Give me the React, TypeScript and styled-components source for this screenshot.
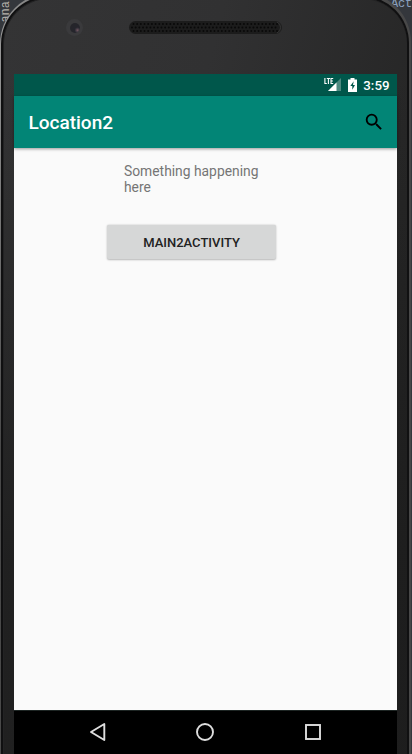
import React from "react";
import styled, { createGlobalStyle } from "styled-components";

const GlobalStyle = createGlobalStyle`
  * { box-sizing: border-box; }
  body { margin: 0; background: #303234; font-family: Roboto, sans-serif; }
`;

const Desktop = styled.div`
  position: relative;
  width: 412px;
  height: 754px;
  overflow: hidden;
  background: #34373c;
`;

const EditorText = styled.span<{ $side: "left" | "right" }>`
  position: absolute;
  font: 12px/12px "Liberation Mono", monospace;
  white-space: nowrap;
  ${({ $side }) =>
    $side === "left"
      ? "left: 0; top: 1px; color: #b5b0aa; writing-mode: vertical-rl; transform: rotate(180deg);"
      : "left: 391px; top: -2px; color: #8ba0bd; letter-spacing: -0.2px;"}
`;

const PhoneShell = styled.div`
  position: relative;
  width: 411px;
  height: 860px;
  margin-top: -7px;
  padding: 3px 2px 0 1px;
  border-radius: 51px 49px 0 0;
  background: linear-gradient(100deg, #a0a0a0 0, #8a8a8a 22px, #494949 80px, #484848 100%);
`;

const PhoneRim = styled.div`
  height: 100%;
  padding: 2px 2px 0;
  border-radius: 48px 47px 0 0;
  background: #101011;
`;

const PhoneBody = styled.div`
  height: 100%;
  padding: 0 11px 0 10px;
  border: solid #232324;
  border-width: 1px 0 0 1px;
  border-radius: 46px 45px 0 0;
  background:
    linear-gradient(180deg, transparent 80px, rgba(29, 29, 29, 0.85) 560px),
    linear-gradient(105deg, #343435 0%, #313132 35%, #252525 75%, #1f1f1f 100%);
`;

const Forehead = styled.div`
  display: flex;
  height: 75px;
  padding: 21px 0 0 52px;
`;

const Camera = styled.div`
  display: grid;
  place-items: center;
  width: 17px;
  height: 17px;
  margin: -1px 45px 0 0;
  border-radius: 50%;
  background: #3a3a3c;

  &::after {
    content: "";
    width: 10px;
    height: 10px;
    border-radius: 50%;
    background: radial-gradient(circle at 75% 72%, #74575f 0, #453c46 1.5px, #25252c 3px, #252529 100%);
  }
`;

const Speaker = styled.svg`
  width: 155px;
  height: 15px;
`;

const Screen = styled.main`
  display: flex;
  flex-direction: column;
  width: 383px;
  height: 680px;
  background: #fafafa;
`;

const StatusBar = styled.div`
  display: flex;
  align-items: center;
  justify-content: flex-end;
  flex: 0 0 22px;
  height: 22px;
  padding-right: 7.5px;
  background: #00574b;
  color: #fff;
`;

const StatusIcons = styled.svg`
  width: 34px;
  height: 16px;
  margin: -1px 5.5px 0 0;
`;

const Clock = styled.span`
  padding-top: 2px;
  font-size: 13.3px;
  font-weight: 500;
  line-height: 20px;
`;

const AppBar = styled.header`
  display: flex;
  align-items: center;
  justify-content: space-between;
  flex: 0 0 52px;
  padding: 0 12px 0 14.5px;
  background: #028576;
  box-shadow: 0 1px 3px rgba(0, 0, 0, 0.4);
`;

const Title = styled.h1`
  margin: 2px 0 0;
  color: #fff;
  font-size: 19px;
  font-weight: 500;
  line-height: 24px;
`;

const SearchButton = styled.button`
  display: flex;
  padding: 0;
  border: 0;
  background: none;
`;

const Content = styled.section`
  flex: 1;
  padding: 15px 0 0 93px;
`;

const Message = styled.p`
  width: 150px;
  margin: 0 0 30px 17px;
  color: #757575;
  font-size: 13.85px;
  line-height: 16px;
`;

const ActionButton = styled.button`
  display: block;
  width: 169px;
  height: 34px;
  padding: 1px 0 0;
  border: 0;
  border-radius: 2px;
  background: #d6d7d7;
  box-shadow: 0 0.5px 2px rgba(0, 0, 0, 0.28);
  color: #222;
  font: 500 13px/33px Roboto, sans-serif;
`;

const NavBar = styled.nav`
  display: flex;
  justify-content: space-between;
  flex: 0 0 44px;
  padding: 10px 73px 0;
  border-top: 1px solid #1d2523;
  background: #000;
`;

const NavIcon = styled.svg`
  width: 22px;
  height: 22px;
  fill: none;
  stroke: #dedede;
  stroke-width: 1.9;
`;

const speakerRows = [
  { y: 4, start: 5.5, count: 40 },
  { y: 7.5, start: 4, count: 40 },
  { y: 11, start: 5.5, count: 40 },
];

function SpeakerGrille() {
  return (
    <Speaker viewBox="0 0 155 15">
      <rect x="1" y="1" width="153" height="13" rx="6.5" fill="#1c1c1c" />
      <path d="M149 2a6 6 0 0 1 0 11" fill="none" stroke="#3b3b3b" strokeWidth="0.8" />
      {speakerRows.map(({ y, start, count }) =>
        Array.from({ length: count }, (_, i) => (
          <circle key={`${y}-${i}`} cx={start + i * 3.68} cy={y} r="0.95" fill="#090909" />
        )),
      )}
    </Speaker>
  );
}

export default function App() {
  return (
    <>
      <GlobalStyle />
      <Desktop>
        <EditorText $side="left">ana</EditorText>
        <EditorText $side="right">Act</EditorText>
        <PhoneShell>
          <PhoneRim>
            <PhoneBody>
              <Forehead>
                <Camera />
                <SpeakerGrille />
              </Forehead>
              <Screen>
                <StatusBar>
                  <StatusIcons viewBox="0 0 34 16">
                    <path d="M17 1V14H4Z" fill="#4d8980" />
                    <path d="M12.5 5.5V14H4Z" fill="#fff" />
                    <path
                      d="M.9 1V6.5H2.8M2.8 1.5H6M4.4 1.5V7M9.2 1.5H7V6.5H9.2M7 4H8.9"
                      fill="none"
                      stroke="#fff"
                      strokeWidth="1.1"
                    />
                    <path d="M26.5 1h4v1.5H33V15h-9V2.5h2.5Z" fill="#fff" />
                    <path d="M29.7 4.3 26.3 9h2v3.8L31 8h-2Z" fill="#00574b" />
                  </StatusIcons>
                  <Clock>3:59</Clock>
                </StatusBar>
                <AppBar>
                  <Title>Location2</Title>
                  <SearchButton aria-label="Search">
                    <svg width="22" height="22" viewBox="0 0 24 24">
                      <path d="M15.5 14h-.79l-.28-.27A6.47 6.47 0 0 0 16 9.5 6.5 6.5 0 1 0 9.5 16c1.61 0 3.09-.59 4.23-1.57l.27.28v.79l5 4.99L20.49 19l-4.99-5zm-6 0C7.01 14 5 11.99 5 9.5S7.01 5 9.5 5 14 7.01 14 9.5 11.99 14 9.5 14z" />
                    </svg>
                  </SearchButton>
                </AppBar>
                <Content>
                  <Message>Something happening here</Message>
                  <ActionButton>MAIN2ACTIVITY</ActionButton>
                </Content>
                <NavBar>
                  <NavIcon viewBox="0 0 22 22">
                    <path d="M17.3 3v16L4 11Z" strokeLinejoin="round" />
                  </NavIcon>
                  <NavIcon viewBox="0 0 22 22">
                    <circle cx="10" cy="11" r="8" />
                  </NavIcon>
                  <NavIcon viewBox="0 0 22 22">
                    <rect x="4" y="4" width="14" height="14" />
                  </NavIcon>
                </NavBar>
              </Screen>
            </PhoneBody>
          </PhoneRim>
        </PhoneShell>
      </Desktop>
    </>
  );
}
